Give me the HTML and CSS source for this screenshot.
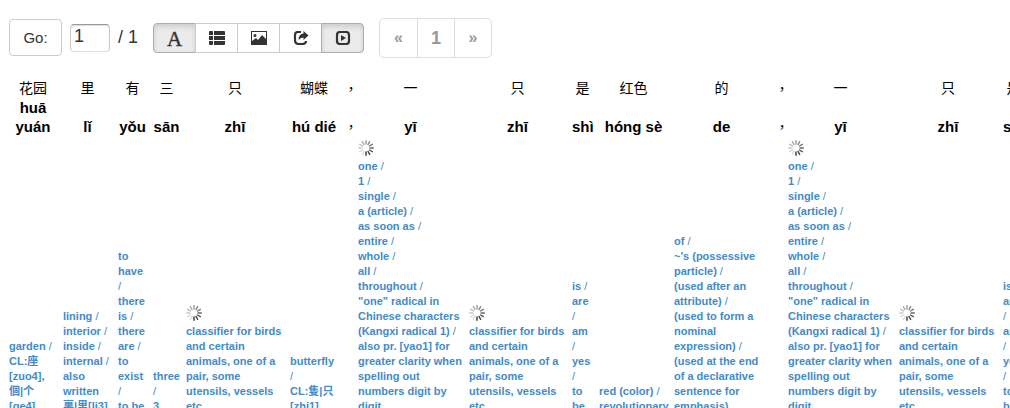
FILE: index.html
```html
<!DOCTYPE html>
<html lang="en">
<head>
<meta charset="utf-8">
<title>Reader</title>
<link rel="stylesheet" href="styles.css">
<script src="reader.js" defer></script>
</head>
<body>
<svg class="defs" aria-hidden="true">
  <symbol id="spinner" viewBox="-8 -8 16 16">
    <g stroke-width="1.4" stroke-linecap="round">
      <path d="M0-4V-7.3" stroke="#999"/>
      <path d="M0-4V-7.3" stroke="#888" transform="rotate(30)"/>
      <path d="M0-4V-7.3" stroke="#777" transform="rotate(60)"/>
      <path d="M0-4V-7.3" stroke="#666" transform="rotate(90)"/>
      <path d="M0-4V-7.3" stroke="#555" transform="rotate(120)"/>
      <path d="M0-4V-7.3" stroke="#444" transform="rotate(150)"/>
      <path d="M0-4V-7.3" stroke="#333" transform="rotate(180)"/>
      <path d="M0-4V-7.3" stroke="#ddd" transform="rotate(210)"/>
      <path d="M0-4V-7.3" stroke="#d8d8d8" transform="rotate(240)"/>
      <path d="M0-4V-7.3" stroke="#ccc" transform="rotate(270)"/>
      <path d="M0-4V-7.3" stroke="#bbb" transform="rotate(300)"/>
      <path d="M0-4V-7.3" stroke="#aaa" transform="rotate(330)"/>
    </g>
  </symbol>
</svg>
<form class="toolbar">
  <button type="button" class="btn go">Go:</button>
  <label class="page"><input type="text" value="1" aria-label="Page"><span>/ 1</span></label>
  <div class="group">
    <button type="button" class="tool active" aria-label="Font"><span class="letter">A</span></button>
    <button type="button" class="tool" aria-label="List"><svg viewBox="0 0 16 14"><path d="M0 1q0-1 1-1h2q1 0 1 1v3H0zM0 5h4v4H0zM0 10h4v3q0 1-1 1H1q-1 0-1-1zM5 0h10q1 0 1 1v3H5zM5 5h11v4H5zM5 10h11v3q0 1-1 1H5z"/></svg></button>
    <button type="button" class="tool" aria-label="Picture"><svg viewBox="0 0 16 14"><path fill-rule="evenodd" d="M0 0h16v14H0zM1 1v9l4-3 2 2 4-5 4 4V1zM4 3a1.500 1.500 0 1 1 0 3 1.500 1.500 0 0 1 0-3z"/></svg></button>
    <button type="button" class="tool" aria-label="Share"><svg viewBox="0 0 16 14"><path d="M8 1H5Q2 1 2 4v5q0 4 4 4h3q4 0 4-3" fill="none" stroke="currentColor" stroke-width="2.200"/><path d="M10.500 0l5 4.500-5 4.500V6.500Q7.500 6.500 5.500 9q0-6 5-6.500z"/></svg></button>
    <button type="button" class="tool active" aria-label="Play"><svg viewBox="0 0 16 14"><rect x="2" y="1" width="12" height="12" rx="3" fill="none" stroke="currentColor" stroke-width="2.200"/><path d="M6 4l5 3-5 3z"/></svg></button>
  </div>
  <nav class="pages" aria-label="Pages"><a href="#prev">«</a><a href="#1">1</a><a href="#next">»</a></nav>
</form>
<table class="reader">
  <colgroup id="cols"></colgroup>
  <tbody>
    <tr class="hanzi" id="hanzi"></tr>
    <tr class="pinyin" id="pinyin"></tr>
    <tr class="gloss" id="gloss"></tr>
  </tbody>
</table>
</body>
</html>
```
FILE: styles.css
```css
* { box-sizing: border-box; }
html { overflow: hidden; }
body { margin: 0; background: #fff; color: #333; font: 14px/20px "Liberation Sans", "Noto Sans CJK SC", sans-serif; }
.defs { position: absolute; width: 0; height: 0; }
.toolbar { display: flex; align-items: center; height: 75px; padding: 0 9px; }
.btn, .tool { border: 1px solid #ccc; background: #fff; color: #333; font-family: inherit; }
.btn { width: 53px; height: 37px; padding: 0; border-radius: 4px; font-size: 15px; }
.page { display: flex; align-items: center; margin-left: 8px; font-size: 18px; }
.page input { width: 40px; height: 28px; padding: 0 3px 2px; border: 1px solid #ccc; border-top-color: #999; border-bottom-color: #ddd; border-radius: 4px; color: #333; font: inherit; box-shadow: inset 0 1px 1px #ddd; }
.page span { margin-left: 8px; padding-bottom: 2px; }
.group { display: flex; margin-left: 15px; }
.tool { display: flex; align-items: center; justify-content: center; width: 43px; height: 30px; padding: 0; }
.tool + .tool { margin-left: -1px; }
.tool:first-child { border-radius: 4px 0 0 4px; }
.tool:last-child { border-radius: 0 4px 4px 0; }
.tool.active { background: #ebebeb; border-color: #adadad; box-shadow: inset 0 3px 5px rgba(0, 0, 0, .125); }
.tool svg { width: 16px; height: 14px; fill: currentColor; }
.letter { padding-top: 2px; font: 21px/26px "Liberation Serif", serif; -webkit-text-stroke: 0.4px; }
.pages { display: flex; margin-left: 15px; font-size: 18px; font-weight: bold; border: 1px solid #ddd; border-radius: 5px; }
.pages a { width: 37px; line-height: 38px; text-align: center; color: #999; text-decoration: none; }
.pages a + a { border-left: 1px solid #ddd; }
.pages a:not(:nth-child(2)) { font-size: 16px; }
.reader { table-layout: fixed; width: 1021px; margin: 3px 0 0 6px; border-collapse: collapse; }
.reader td { padding: 0 3px; vertical-align: bottom; }
.hanzi td, .pinyin td { color: #000; text-align: center; }
.hanzi td { height: 20px; }
.pinyin td { font-weight: bold; font-size: 15px; line-height: 19px; }
.reader .comma { padding: 0 0 0 3px; font: 14px/20px "Noto Sans CJK TC", sans-serif; }
.gloss td { padding-top: 4px; color: #428bca; font-size: 11px; line-height: 15px; font-weight: bold; white-space: nowrap; }
.gloss i { font-style: normal; font-weight: normal; }
.spinner { display: block; width: 16px; height: 16px; margin-bottom: 3px; }
```
FILE: reader.js
```js
const one = ['*', 'one /', '1 /', 'single /', 'a (article) /', 'as soon as /', 'entire /', 'whole /', 'all /', 'throughout /', '"one" radical in', 'Chinese characters', '(Kangxi radical 1) /', 'also pr. [yao1] for', 'greater clarity when', 'spelling out', 'numbers digit by', 'digit'];
const only = ['*', 'classifier for birds', 'and certain', 'animals, one of a', 'pair, some', 'utensils, vessels', 'etc'];
const be = ['is /', 'are', '/', 'am', '/', 'yes', '/', 'to', 'be'];
const COMMA = '\uFF0C';
const words = [
  [54, '花园', 'huā yuán', ['garden /', 'CL:座', '[zuo4],', '個|个', '[ge4]']],
  [55, '里', 'lǐ', ['lining /', 'interior /', 'inside /', 'internal /', 'also', 'written', '裏|里[li3]']],
  [35, '有', 'yǒu', ['to', 'have', '/', 'there', 'is /', 'there', 'are /', 'to', 'exist', '/', 'to be']],
  [33, '三', 'sān', ['three', '/', '3']],
  [104, '只', 'zhī', only],
  [54, '蝴蝶', 'hú dié', ['butterfly', '/', 'CL:隻|只', '[zhi1]']],
  [14, COMMA, COMMA, []],
  [111, '一', 'yī', one],
  [103, '只', 'zhī', only],
  [27, '是', 'shì', be],
  [75, '红色', 'hóng sè', ['red (color) /', 'revolutionary']],
  [101, '的', 'de', ['of /', "~'s (possessive", 'particle) /', '(used after an', 'attribute) /', '(used to form a', 'nominal', 'expression) /', '(used at the end', 'of a declarative', 'sentence for', 'emphasis)']],
  [13, COMMA, COMMA, []],
  [111, '一', 'yī', one],
  [104, '只', 'zhī', only],
  [27, '是', 'shì', be]
];

const spinner = '<svg class="spinner" aria-label="Loading"><use href="#spinner"/></svg>';

function cell(row, html, comma) {
  const td = document.createElement('td');
  if (comma) { td.className = 'comma'; td.lang = 'zh-TW'; }
  td.innerHTML = html;
  document.getElementById(row).append(td);
}

for (const [width, hanzi, pinyin, lines] of words) {
  const col = document.createElement('col');
  col.style.width = width + 'px';
  document.getElementById('cols').append(col);
  const comma = hanzi === COMMA;
  cell('hanzi', hanzi, comma);
  cell('pinyin', pinyin, comma);
  cell('gloss', lines.map(line => line === '*' ? spinner : '<div>' + line.replace('/', '<i>/</i>') + '</div>').join(''));
}
```
